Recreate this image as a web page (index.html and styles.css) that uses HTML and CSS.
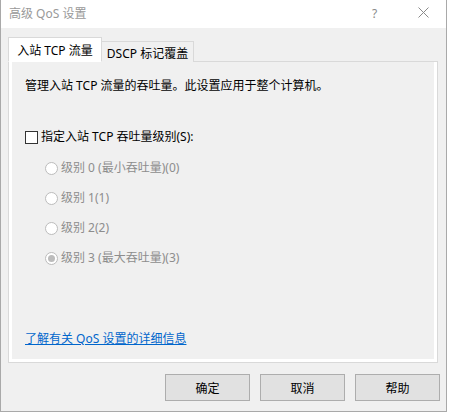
FILE: index.html
```html
<!DOCTYPE html>
<html lang="zh-CN">
<head>
<meta charset="utf-8">
<title>高级 QoS 设置</title>
<link rel="stylesheet" href="styles.css">
</head>
<body>
<div class="window">
  <div class="titlebar">
    <span class="title">高级 QoS 设置</span>
    <span class="tb-help">?</span>
    <span class="tb-close">
      <svg width="11" height="11" viewBox="0 0 11 11"><path d="M0.5 0.5L10.5 10.5M10.5 0.5L0.5 10.5" stroke="#8a8a8a" stroke-width="1" fill="none"/></svg>
    </span>
  </div>
  <div class="body">
    <div class="tabs">
      <div class="tab active">入站 TCP 流量</div>
      <div class="tab">DSCP 标记覆盖</div>
    </div>
    <div class="panel">
      <div class="desc">管理入站 TCP 流量的吞吐量。此设置应用于整个计算机。</div>
      <div class="check-row">
        <span class="checkbox"></span>
        <span>指定入站 TCP 吞吐量级别(S):</span>
      </div>
      <div class="radios">
        <div class="radio-row"><span class="radio"></span><span>级别 0 (最小吞吐量)(0)</span></div>
        <div class="radio-row"><span class="radio"></span><span>级别 1(1)</span></div>
        <div class="radio-row"><span class="radio"></span><span>级别 2(2)</span></div>
        <div class="radio-row"><span class="radio checked"></span><span>级别 3 (最大吞吐量)(3)</span></div>
      </div>
      <div class="spacer"></div>
      <a class="link" href="#">了解有关 QoS 设置的详细信息</a>
    </div>
    <div class="buttons">
      <button class="btn">确定</button>
      <button class="btn">取消</button>
      <button class="btn">帮助</button>
    </div>
  </div>
</div>
</body>
</html>
```
FILE: styles.css
```css
html, body {
  margin: 0;
  padding: 0;
  background: #ffffff;
}
body {
  font-family: "Noto Sans", "Noto Sans CJK SC", sans-serif;
  font-size: 12px;
  color: #000;
}
.window {
  width: 447px;
  height: 412px;
  box-sizing: border-box;
  border-left: 1px solid #a9a9a9;
  border-right: 1px solid #a9a9a9;
  border-bottom: 1px solid #a9a9a9;
  background: #f0f0f0;
  display: flex;
  flex-direction: column;
}
.titlebar {
  height: 28px;
  background: #ffffff;
  display: flex;
  align-items: center;
  padding-left: 8px;
}
.title {
  color: #999999;
  font-size: 12px;
  flex: 1;
  margin-top: -2px;
}
.tb-help {
  color: #8a8a8a;
  font-size: 12px;
  width: 12px;
  margin-right: 34px;
  margin-top: -2px;
}
.tb-close {
  display: flex;
  margin-right: 17px;
  margin-top: -3px;
}
.body {
  flex: 1;
  display: flex;
  flex-direction: column;
  padding: 9px 7px 0 7px;
}
.tabs {
  display: flex;
  align-items: flex-end;
  height: 25px;
  position: relative;
  z-index: 1;
  margin-bottom: -1px;
}
.tab {
  box-sizing: border-box;
  height: 21px;
  border: 1px solid #d9d9d9;
  border-bottom: none;
  background: #f0f0f0;
  display: flex;
  align-items: center;
  justify-content: center;
  width: 92px;
  border-left: none;
  padding-top: 1px;
}
.tab.active {
  height: 25px;
  width: 94px;
  background: #ffffff;
  border-left: 1px solid #d9d9d9;
  border-bottom: 1px solid #ffffff;
  padding-top: 0;
}
.panel {
  width: 430px;
  height: 302px;
  box-sizing: border-box;
  border: 1px solid #d9d9d9;
  box-shadow: inset 3px 0 0 #ffffff, inset -3px 0 0 #ffffff, inset 0 -3px 0 #ffffff;
  background: #f0f0f0;
  display: flex;
  flex-direction: column;
  padding: 16px 0 15px 16px;
}
.desc {
  line-height: 16px;
}
.check-row {
  margin-top: 35px;
  display: flex;
  align-items: center;
  line-height: 16px;
}
.checkbox {
  width: 11px;
  height: 11px;
  border: 1px solid #333;
  background: #fff;
  margin-right: 3px;
  flex: none;
}
.radios {
  margin-top: 15px;
  display: flex;
  flex-direction: column;
  gap: 14px;
  padding-left: 20px;
  color: #8d8d8d;
}
.radio-row {
  display: flex;
  align-items: center;
  line-height: 16px;
}
.radio {
  box-sizing: border-box;
  width: 13px;
  height: 13px;
  border: 1px solid #bcbcbc;
  border-radius: 50%;
  background: #ffffff;
  margin-right: 3px;
  display: flex;
  align-items: center;
  justify-content: center;
  flex: none;
}
.radio.checked::after {
  content: "";
  width: 7px;
  height: 7px;
  border-radius: 50%;
  background: #bcbcbc;
}
.spacer {
  flex: 1;
}
.link {
  color: #0066cc;
  text-decoration: underline;
  line-height: 16px;
  align-self: flex-start;
}
.buttons {
  display: flex;
  justify-content: flex-end;
  gap: 10px;
  margin-top: 11px;
  margin-right: -1px;
}
.btn {
  width: 85px;
  height: 27px;
  box-sizing: border-box;
  border: 1px solid #adadad;
  background: #e1e1e1;
  font-family: "Noto Sans", "Noto Sans CJK SC", sans-serif;
  font-size: 12px;
  color: #000;
  padding: 0;
}
```
